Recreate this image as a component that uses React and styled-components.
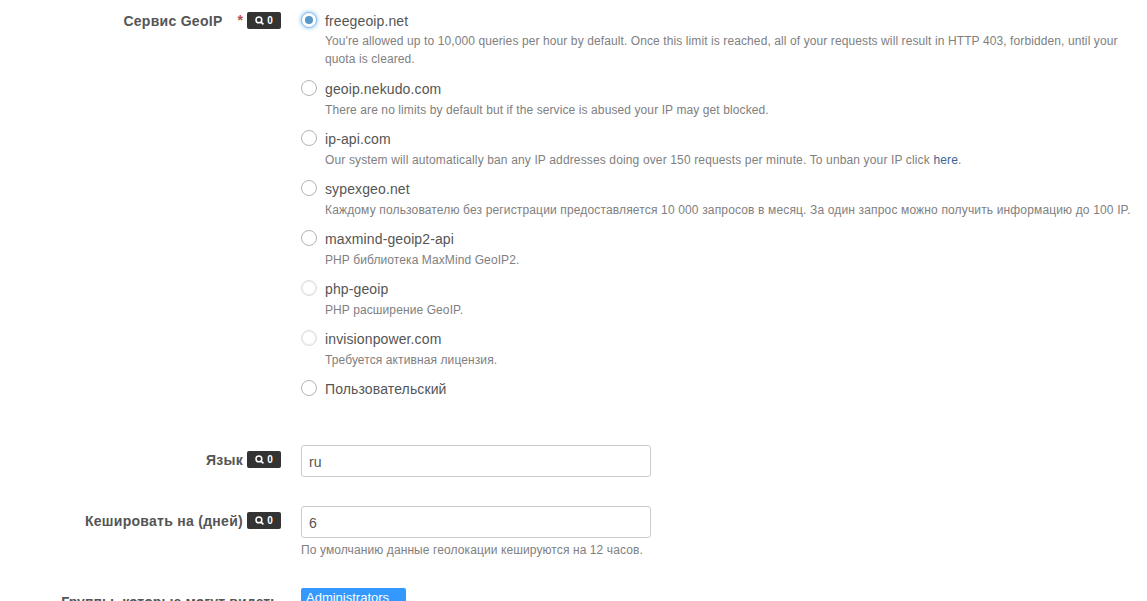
import React from "react";
import styled, { createGlobalStyle } from "styled-components";

const Global = createGlobalStyle`
  html, body {
    margin: 0;
    height: 601px;
    overflow: hidden;
    background: #fff;
    font-family: "Liberation Sans", Arial, sans-serif;
    color: #555;
  }
`;

const Page = styled.div`
  padding-top: 11px;
`;

const FormRow = styled.div`
  display: flex;
  gap: 20px;
  margin-bottom: ${(p) => p.$mb || 0}px;
`;

const LabelCol = styled.div`
  width: 281px;
  flex: none;
  display: flex;
  justify-content: flex-end;
  align-items: flex-start;
  padding-top: ${(p) => p.$pt || 0}px;
  padding-right: ${(p) => p.$pr || 0}px;
  box-sizing: border-box;
  white-space: nowrap;
`;

const LabelText = styled.span`
  font-size: 14px;
  font-weight: bold;
  line-height: 20px;
  color: #555;
  letter-spacing: ${(p) => p.$ls ?? 0.28}px;
`;

const Star = styled.span`
  font-size: 14px;
  font-weight: bold;
  line-height: 18px;
  color: #b94a48;
  margin-left: 15px;
  margin-right: 4px;
`;

const Badge = styled.span`
  display: inline-flex;
  align-items: center;
  justify-content: center;
  gap: 3px;
  width: 34px;
  height: 17px;
  margin: 1px 0 0 ${(p) => p.$ml || 0}px;
  background: #333;
  border-radius: 2px;
  color: #fff;
  font-size: 10px;
  font-weight: bold;
`;

const Field = styled.div`
  flex: none;
  width: 840px;
`;

const RadioRow = styled.div`
  display: flex;
  gap: 8px;
  margin-bottom: ${(p) => p.$mb ?? 10}px;
`;

const RadioDot = styled.span`
  flex: none;
  box-sizing: border-box;
  width: 16px;
  height: 16px;
  margin-top: 1px;
  border-radius: 50%;
  background: #fff;
  border: 1px solid ${(p) => (p.$checked ? "#8fc0ea" : p.$disabled ? "#dcdcdc" : "#b4b4b4")};
  box-shadow: ${(p) =>
    p.$checked ? "0 0 4px rgba(82,168,236,.8)" : p.$disabled ? "inset 0 0 0 1px #f0f0f0" : "none"};
  display: flex;
  align-items: center;
  justify-content: center;

  &::after {
    content: "";
    display: ${(p) => (p.$checked ? "block" : "none")};
    width: 8px;
    height: 8px;
    border-radius: 50%;
    background: #5897c9;
  }
`;

const RadioName = styled.div`
  font-size: 14px;
  line-height: 20px;
  color: #555;
  letter-spacing: 0.12px;
  margin-bottom: ${(p) => p.$gap ?? 2}px;
`;

const Help = styled.div`
  font-size: 12px;
  line-height: 18px;
  color: #808080;
  letter-spacing: ${(p) => p.$ls ?? 0.1}px;
  margin-top: ${(p) => p.$mt || 0}px;
  width: ${(p) => p.$w || "auto"};
  white-space: ${(p) => (p.$w ? "normal" : "nowrap")};

  a {
    color: #3d6594;
    text-decoration: none;
  }
`;

const TextInput = styled.input`
  display: block;
  box-sizing: border-box;
  width: 350px;
  height: 32px;
  padding: 1px 7px 0;
  border: 1px solid #ccc;
  border-radius: 3px;
  background: #fff;
  font: 14px "Liberation Sans", Arial, sans-serif;
  color: #555;
`;

const GroupTag = styled.div`
  width: 105px;
  height: 30px;
  box-sizing: border-box;
  padding: 2px 5px;
  background: #3399ff;
  border-radius: 2px 2px 0 0;
  color: #fff;
  font-size: 13px;
  line-height: 16px;
`;

const SearchIcon = () => (
  <svg width="9" height="9" viewBox="0 0 9 9" fill="none" stroke="#fff">
    <circle cx="3.9" cy="3.9" r="2.9" strokeWidth="1.5" />
    <path d="M6 6 L8.4 8.4" strokeWidth="1.7" />
  </svg>
);

const Count = () => (
  <>
    <SearchIcon />
    <span>0</span>
  </>
);

const services = [
  {
    name: "freegeoip.net",
    checked: true,
    help: "You're allowed up to 10,000 queries per hour by default. Once this limit is reached, all of your requests will result in HTTP 403, forbidden, until your quota is cleared.",
    w: "810px",
    gap: 1,
    mb: 11,
  },
  { name: "geoip.nekudo.com", help: "There are no limits by default but if the service is abused your IP may get blocked." },
  {
    name: "ip-api.com",
    ls: 0.14,
    help: (
      <>
        Our system will automatically ban any IP addresses doing over 150 requests per minute. To unban your IP click <a href="#here">here</a>.
      </>
    ),
  },
  {
    name: "sypexgeo.net",
    ls: 0.15,
    help: "Каждому пользователю без регистрации предоставляется 10 000 запросов в месяц. За один запрос можно получить информацию до 100 IP.",
  },
  { name: "maxmind-geoip2-api", help: "PHP библиотека MaxMind GeoIP2." },
  { name: "php-geoip", disabled: true, help: "PHP расширение GeoIP." },
  { name: "invisionpower.com", disabled: true, help: "Требуется активная лицензия." },
  { name: "Пользовательский", mb: 0 },
];

export default function App() {
  return (
    <Page>
      <Global />
      <FormRow $mb={44}>
        <LabelCol>
          <LabelText>Сервис GeoIP</LabelText>
          <Star>*</Star>
          <Badge><Count /></Badge>
        </LabelCol>
        <Field>
          {services.map((s) => (
            <RadioRow key={s.name} $mb={s.mb}>
              <RadioDot $checked={s.checked} $disabled={s.disabled} />
              <div>
                <RadioName $gap={s.gap}>{s.name}</RadioName>
                {s.help && <Help $w={s.w} $ls={s.ls}>{s.help}</Help>}
              </div>
            </RadioRow>
          ))}
        </Field>
      </FormRow>

      <FormRow $mb={29}>
        <LabelCol $pt={5}>
          <LabelText>Язык</LabelText>
          <Badge $ml={4}><Count /></Badge>
        </LabelCol>
        <Field>
          <TextInput defaultValue="ru" />
        </Field>
      </FormRow>

      <FormRow $mb={29}>
        <LabelCol $pt={5}>
          <LabelText>Кешировать на (дней)</LabelText>
          <Badge $ml={4}><Count /></Badge>
        </LabelCol>
        <Field>
          <TextInput defaultValue="6" />
          <Help $mt={3}>По умолчанию данные геолокации кешируются на 12 часов.</Help>
        </Field>
      </FormRow>

      <FormRow>
        <LabelCol $pt={4} $pr={2}>
          <LabelText $ls={0.1}>Группы, которые могут видеть</LabelText>
        </LabelCol>
        <Field>
          <GroupTag>Administrators</GroupTag>
        </Field>
      </FormRow>
    </Page>
  );
}
